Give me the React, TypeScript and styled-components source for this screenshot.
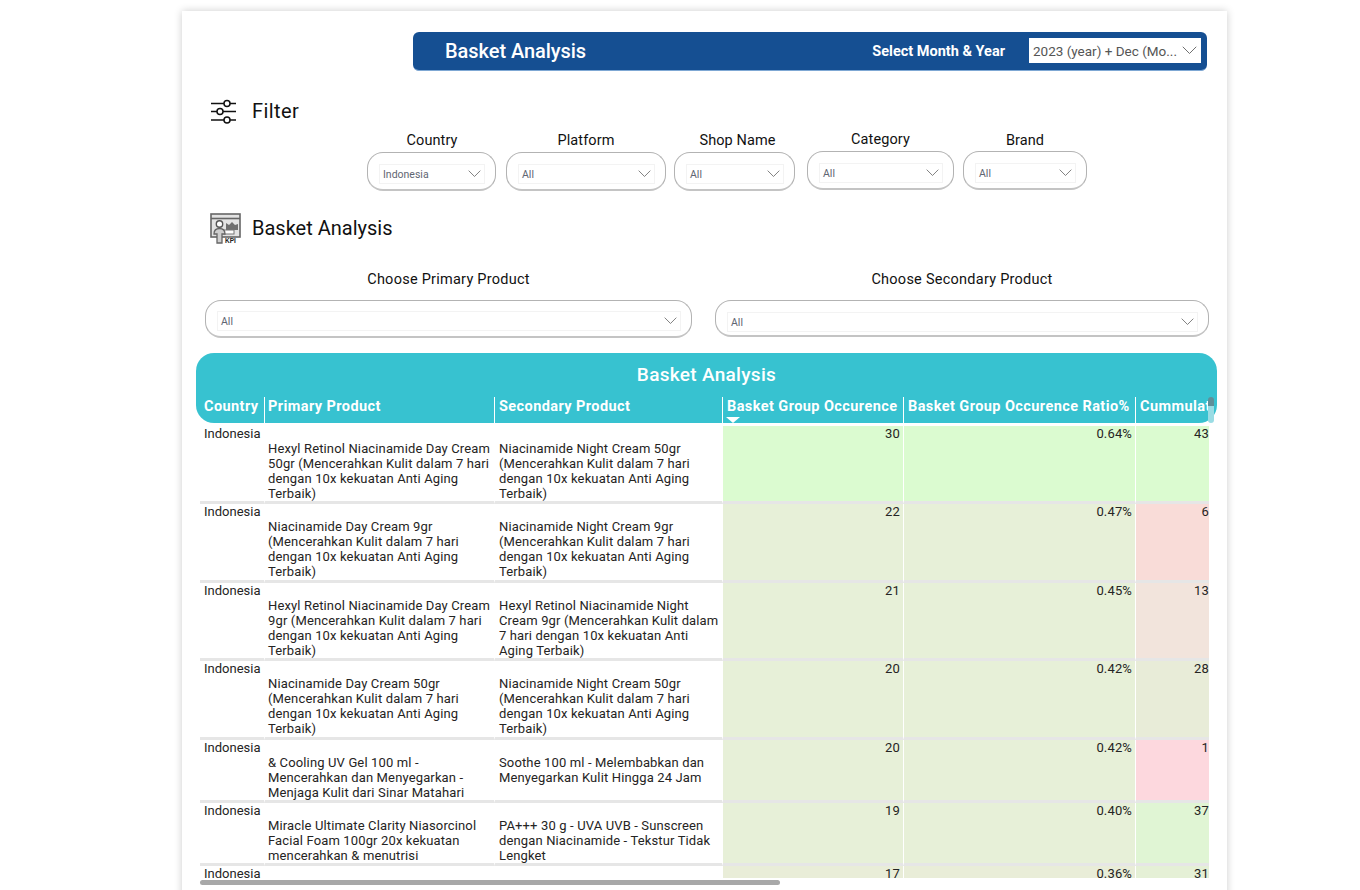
import React from 'react'
import styled, { createGlobalStyle } from 'styled-components'

const FONT = `Roboto, "Liberation Sans", sans-serif`

const GlobalStyle = createGlobalStyle`
  html, body {
    margin: 0;
    height: 890px;
    overflow: hidden;
    background: #fff;
  }
  body {
    font-family: ${FONT};
    color: #111;
  }
`

const Canvas = styled.div`
  box-sizing: border-box;
  width: 1045px;
  height: 900px;
  margin: 11px 0 0 182px;
  background: #fff;
  box-shadow: 0 0 8px rgba(0, 0, 0, 0.2);
  display: flex;
  flex-direction: column;
  padding-top: 21px;
`

const TopBar = styled.header`
  box-sizing: border-box;
  width: 794px;
  height: 39px;
  margin-left: 231px;
  padding: 0 6px 1px 32px;
  display: flex;
  align-items: center;
  background: #154f92;
  border-radius: 6px;
  border-bottom: 1px solid #7fa8d4;
  color: #fff;
`

const BarTitle = styled.h1`
  flex: 1;
  margin: 0;
  font-size: 20px;
  font-weight: 500;
  letter-spacing: -0.05px;
`

const BarLabel = styled.span`
  margin: 1px 24px 0 0;
  font-size: 14.5px;
  font-weight: 700;
`

const MonthSelect = styled.div`
  box-sizing: border-box;
  width: 172px;
  height: 25px;
  padding: 0 4px;
  display: flex;
  align-items: center;
  justify-content: space-between;
  background: #fff;
  color: #555;
  font-size: 13.5px;
  white-space: nowrap;
`

const SectionHead = styled.div<{ $top: number; $height: number }>`
  height: ${({ $height }) => $height}px;
  margin-top: ${({ $top }) => $top}px;
  padding-left: 28px;
  display: flex;
  align-items: center;
`

const IconSlot = styled.div`
  width: 42px;
  flex: none;
  display: flex;
`

const SectionTitle = styled.h2<{ $raise?: number; $track?: number }>`
  margin: -${({ $raise }) => $raise ?? 1}px 0 0;
  font-size: 20px;
  font-weight: 400;
  letter-spacing: ${({ $track }) => $track ?? 0}px;
  color: #111;
`

const FilterRow = styled.div`
  margin: 8px 0 0 185px;
  display: flex;
`

const Slicer = styled.div<{ $width: number; $gap?: number; $lift?: boolean }>`
  width: ${({ $width }) => $width}px;
  margin-left: ${({ $gap }) => $gap ?? 0}px;
  margin-top: ${({ $lift }) => ($lift ? -1 : 0)}px;
`

const SlicerLabel = styled.div<{ $nudge?: number; $sink?: boolean }>`
  height: 16px;
  margin-top: ${({ $sink }) => ($sink ? 1 : 0)}px;
  margin-bottom: ${({ $sink }) => ($sink ? 2 : 3)}px;
  padding-left: ${({ $nudge }) => $nudge ?? 0}px;
  text-align: center;
  font-size: 14.5px;
  line-height: 16px;
  letter-spacing: 0.1px;
`

const SlicerBox = styled.div<{ $height?: number; $drop?: number; $pad?: number }>`
  box-sizing: border-box;
  height: ${({ $height }) => $height ?? 39}px;
  margin-top: ${({ $drop }) => $drop ?? 0}px;
  padding: ${({ $pad }) => $pad ?? 11}px 10px 0 11px;
  background: #fff;
  border: 1px solid #b3b3b3;
  border-bottom: 2px solid #c4c4c4;
  border-radius: 16px;
`

const SlicerInput = styled.div`
  box-sizing: border-box;
  height: 20px;
  padding: 0 3px;
  display: flex;
  align-items: center;
  justify-content: space-between;
  border: 1px solid #f3f3f3;
  color: #5f6672;
  font-size: 10.5px;
`

const ProductPickers = styled.div`
  margin: 29px 0 0 23px;
  display: flex;
  gap: 23px;
`

const PickerLabel = styled(SlicerLabel)`
  margin-bottom: 12px;
  letter-spacing: 0.25px;
`

const TableWrap = styled.section`
  position: relative;
  width: 1021px;
  margin: 15px 0 0 14px;
`

const TableHead = styled.div`
  height: 70px;
  background: #37c2d0;
  border-radius: 18px;
  color: #fff;
`

const TableTitle = styled.div`
  height: 44px;
  text-align: center;
  font-size: 19px;
  font-weight: 500;
  line-height: 43px;
  letter-spacing: 0.3px;
`

const COLUMNS = '65px 230px 228px 181px 232px 73px'

const HeadRow = styled.div`
  margin-left: 4px;
  width: 1009px;
  height: 26px;
  display: grid;
  grid-template-columns: ${COLUMNS};
`

const HeadCell = styled.div<{ $inset?: number }>`
  position: relative;
  box-sizing: border-box;
  padding: 1px 0 0 ${({ $inset }) => $inset ?? 4}px;
  overflow: hidden;
  white-space: nowrap;
  font-size: 14.5px;
  font-weight: 700;
  line-height: 18px;
  letter-spacing: 0.42px;
  border-right: 1px solid #fff;

  &:last-child {
    border-right: 0;
  }
`

const SortMark = styled.span`
  position: absolute;
  left: 3px;
  bottom: 0;
  border-left: 7px solid transparent;
  border-right: 7px solid transparent;
  border-top: 6px solid #fff;
`

const TableBody = styled.div`
  margin-left: 4px;
  width: 1009px;
  height: 455px;
  padding-top: 3px;
  box-sizing: border-box;
  overflow: hidden;
`

const Row = styled.div<{ $height: number }>`
  height: ${({ $height }) => $height}px;
  display: grid;
  grid-template-columns: ${COLUMNS};
`

const Cell = styled.div`
  box-sizing: border-box;
  overflow: hidden;
  border-right: 1px solid #fff;
  border-bottom: 3px solid #e6e6e6;
  font-size: 13px;
  line-height: 15px;
  letter-spacing: 0.14px;
  color: #252423;
`

const CountryCell = styled(Cell)`
  padding-left: 4px;
  letter-spacing: 0;
`

const ProductCell = styled(Cell)<{ $inset: number }>`
  padding: 15px 0 0 ${({ $inset }) => $inset}px;
  white-space: pre-line;
`

const HeatCell = styled(Cell)<{ $color: string }>`
  padding-right: 3px;
  text-align: right;
  background: ${({ $color }) => $color};
`

const LastCell = styled(HeatCell)`
  padding-right: 0;
  border-right: 0;
`

const HorizontalThumb = styled.div`
  position: absolute;
  left: 4px;
  top: 527px;
  width: 580px;
  height: 5px;
  border-radius: 3px;
  background: #a8a8a8;
`

const VerticalThumb = styled.div`
  position: absolute;
  left: 1012px;
  top: 44px;
  width: 6px;
  height: 26px;
  border-radius: 3px;
  background: linear-gradient(#5f8f99 0, #5f8f99 9px, #9adce4 9px);
`

const Chevron = ({ size = 13, color = '#6b6b6b' }: { size?: number; color?: string }) => (
  <svg width={size} height={size * 0.55} viewBox="0 0 20 11" fill="none" stroke={color} strokeWidth="1.3">
    <path d="M1 1l9 9 9-9" />
  </svg>
)

const SlidersIcon = () => (
  <svg width="27" height="26" viewBox="0 0 27 26" fill="none" stroke="#111" strokeWidth="1.5">
    <path d="M1 4.500h13M20 4.500h6M1 12.500h6M13 12.500h13M1 21h13M20 21h6" />
    <circle cx="17" cy="4.500" r="3" />
    <circle cx="10" cy="12.500" r="3" />
    <circle cx="17" cy="21" r="3" />
  </svg>
)

const KpiIcon = () => (
  <svg width="32" height="31" viewBox="0 0 32 31">
    <rect x="1" y="1" width="29" height="23" fill="#e3e3e3" stroke="#666" strokeWidth="1.6" />
    <path d="M1 5.500h29" stroke="#666" strokeWidth="1.6" />
    <path d="M16 17v-7l3 2 3-3 3 3 3-1v6z" fill="#6f6f6f" />
    <rect x="14" y="17" width="10" height="4" fill="#fff" stroke="#777" />
    <circle cx="9.500" cy="11" r="3.200" fill="#fff" stroke="#555" strokeWidth="1.400" />
    <path d="M4 21c0-4 2-5.500 5.500-5.500s5.500 1.500 5.500 5.500h-3v9H7v-9z" fill="#cfcfcf" stroke="#666" strokeWidth="1.300" />
    <text x="15" y="30" fontSize="6.5" fontWeight="700" fontFamily="Liberation Sans, sans-serif" fill="#222">KPI</text>
  </svg>
)

type SlicerData = {
  label: string
  value: string
  width: number
  gap?: number
  lift?: boolean
  nudge?: number
  sink?: boolean
}

const filters: SlicerData[] = [
  { label: 'Country', value: 'Indonesia', width: 129, nudge: 1 },
  { label: 'Platform', value: 'All', width: 160, gap: 10 },
  { label: 'Shop Name', value: 'All', width: 121, gap: 8, nudge: 6 },
  { label: 'Category', value: 'All', width: 147, gap: 12, lift: true },
  { label: 'Brand', value: 'All', width: 124, gap: 9, lift: true, sink: true },
]

type RowData = {
  height: number
  primary: string
  secondary: string
  occurence: number
  ratio: string
  cumulative: string
  base: string
  accent: string
}

const GREEN = '#dbfbd0'
const OLIVE = '#e7f0d8'

const rows: RowData[] = [
  {
    height: 78,
    primary: 'Hexyl Retinol Niacinamide Day Cream\n50gr (Mencerahkan Kulit dalam 7 hari\ndengan 10x kekuatan Anti Aging\nTerbaik)',
    secondary: 'Niacinamide Night Cream 50gr\n(Mencerahkan Kulit dalam 7 hari\ndengan 10x kekuatan Anti Aging\nTerbaik)',
    occurence: 30,
    ratio: '0.64%',
    cumulative: '43',
    base: GREEN,
    accent: GREEN,
  },
  {
    height: 79,
    primary: 'Niacinamide Day Cream 9gr\n(Mencerahkan Kulit dalam 7 hari\ndengan 10x kekuatan Anti Aging\nTerbaik)',
    secondary: 'Niacinamide Night Cream 9gr\n(Mencerahkan Kulit dalam 7 hari\ndengan 10x kekuatan Anti Aging\nTerbaik)',
    occurence: 22,
    ratio: '0.47%',
    cumulative: '6',
    base: OLIVE,
    accent: '#f9dcd8',
  },
  {
    height: 78,
    primary: 'Hexyl Retinol Niacinamide Day Cream\n9gr (Mencerahkan Kulit dalam 7 hari\ndengan 10x kekuatan Anti Aging\nTerbaik)',
    secondary: 'Hexyl Retinol Niacinamide Night\nCream 9gr (Mencerahkan Kulit dalam\n7 hari dengan 10x kekuatan Anti\nAging Terbaik)',
    occurence: 21,
    ratio: '0.45%',
    cumulative: '13',
    base: OLIVE,
    accent: '#f2e4dc',
  },
  {
    height: 79,
    primary: 'Niacinamide Day Cream 50gr\n(Mencerahkan Kulit dalam 7 hari\ndengan 10x kekuatan Anti Aging\nTerbaik)',
    secondary: 'Niacinamide Night Cream 50gr\n(Mencerahkan Kulit dalam 7 hari\ndengan 10x kekuatan Anti Aging\nTerbaik)',
    occurence: 20,
    ratio: '0.42%',
    cumulative: '28',
    base: OLIVE,
    accent: '#e8ecd8',
  },
  {
    height: 63,
    primary: '& Cooling UV Gel 100 ml -\nMencerahkan dan Menyegarkan -\nMenjaga Kulit dari Sinar Matahari',
    secondary: 'Soothe 100 ml - Melembabkan dan\nMenyegarkan Kulit Hingga 24 Jam',
    occurence: 20,
    ratio: '0.42%',
    cumulative: '1',
    base: OLIVE,
    accent: '#fdd8de',
  },
  {
    height: 63,
    primary: 'Miracle Ultimate Clarity Niasorcinol\nFacial Foam 100gr 20x kekuatan\nmencerahkan & menutrisi',
    secondary: 'PA+++ 30 g - UVA UVB - Sunscreen\ndengan Niacinamide - Tekstur Tidak\nLengket',
    occurence: 19,
    ratio: '0.40%',
    cumulative: '37',
    base: OLIVE,
    accent: '#e0f5d4',
  },
  {
    height: 63,
    primary: '',
    secondary: '',
    occurence: 17,
    ratio: '0.36%',
    cumulative: '31',
    base: '#e9edd8',
    accent: '#e5f0d6',
  },
]

export default function App() {
  return (
    <>
      <GlobalStyle />
      <Canvas>
        <TopBar>
          <BarTitle>Basket Analysis</BarTitle>
          <BarLabel>Select Month &amp; Year</BarLabel>
          <MonthSelect>
            <span>2023 (year) + Dec (Mo...</span>
            <Chevron size={15} />
          </MonthSelect>
        </TopBar>

        <SectionHead $top={28} $height={26}>
          <IconSlot>
            <SlidersIcon />
          </IconSlot>
          <SectionTitle $raise={3} $track={0.4}>Filter</SectionTitle>
        </SectionHead>

        <FilterRow>
          {filters.map((f) => (
            <Slicer key={f.label} $width={f.width} $gap={f.gap} $lift={f.lift}>
              <SlicerLabel $nudge={f.nudge} $sink={f.sink}>{f.label}</SlicerLabel>
              <SlicerBox>
                <SlicerInput>
                  <span>{f.value}</span>
                  <Chevron />
                </SlicerInput>
              </SlicerBox>
            </Slicer>
          ))}
        </FilterRow>

        <SectionHead $top={22} $height={30}>
          <IconSlot>
            <KpiIcon />
          </IconSlot>
          <SectionTitle>Basket Analysis</SectionTitle>
        </SectionHead>

        <ProductPickers>
          <Slicer $width={487}>
            <PickerLabel>Choose Primary Product</PickerLabel>
            <SlicerBox $height={38} $pad={10}>
              <SlicerInput>
                <span>All</span>
                <Chevron />
              </SlicerInput>
            </SlicerBox>
          </Slicer>
          <Slicer $width={494}>
            <PickerLabel>Choose Secondary Product</PickerLabel>
            <SlicerBox $height={37} $drop={1} $pad={11}>
              <SlicerInput>
                <span>All</span>
                <Chevron />
              </SlicerInput>
            </SlicerBox>
          </Slicer>
        </ProductPickers>

        <TableWrap>
          <TableHead>
            <TableTitle>Basket Analysis</TableTitle>
            <HeadRow>
              <HeadCell>Country</HeadCell>
              <HeadCell $inset={3}>Primary Product</HeadCell>
              <HeadCell>Secondary Product</HeadCell>
              <HeadCell>
                Basket Group Occurence
                <SortMark />
              </HeadCell>
              <HeadCell>Basket Group Occurence Ratio%</HeadCell>
              <HeadCell>Cummulative</HeadCell>
            </HeadRow>
          </TableHead>
          <TableBody>
            {rows.map((r, i) => (
              <Row key={i} $height={r.height}>
                <CountryCell>Indonesia</CountryCell>
                <ProductCell $inset={3}>{r.primary}</ProductCell>
                <ProductCell $inset={4}>{r.secondary}</ProductCell>
                <HeatCell $color={r.base}>{r.occurence}</HeatCell>
                <HeatCell $color={r.base}>{r.ratio}</HeatCell>
                <LastCell $color={r.accent}>{r.cumulative}</LastCell>
              </Row>
            ))}
          </TableBody>
          <HorizontalThumb />
          <VerticalThumb />
        </TableWrap>
      </Canvas>
    </>
  )
}
